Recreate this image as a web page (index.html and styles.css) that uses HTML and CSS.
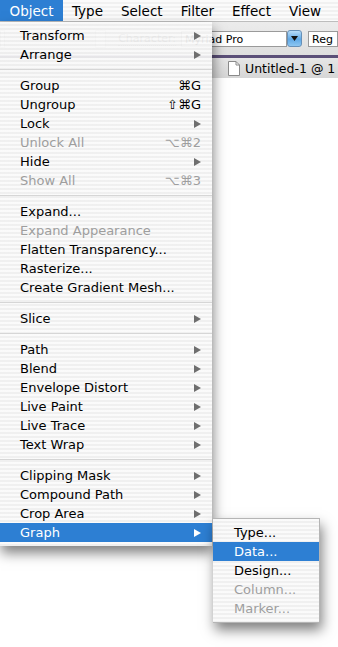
FILE: index.html
```html
<!DOCTYPE html>
<html lang="en">
<head>
    <meta charset="UTF-8">
    <meta name="viewport" content="width=device-width, initial-scale=1.0">
    <title>Object Menu</title>
    <link rel="stylesheet" href="styles.css">
</head>
<body>

<div class="menubar">
    <span class="mb-item active">Object</span>
    <span class="mb-item">Type</span>
    <span class="mb-item">Select</span>
    <span class="mb-item">Filter</span>
    <span class="mb-item">Effect</span>
    <span class="mb-item">View</span>
</div>

<div class="toolbar">
    <span class="stepper"></span>
    <span class="popup"></span>
    <span class="label">Character:</span>
    <span class="field wide">Myriad Pro</span>
    <span class="dropbtn">
        <svg width="7" height="5" viewBox="0 0 7 5"><polygon points="0,0 7,0 3.5,5" fill="#111"/></svg>
    </span>
    <span class="field short">Reg</span>
</div>
<div class="titlebar"></div>
<div class="doctab">
    <svg class="docicon" width="12" height="15" viewBox="0 0 12 15">
        <path d="M0.5 0.5 H8 L11.5 4 V14.5 H0.5 Z" fill="#fff" stroke="#8a8a8a"/>
        <path d="M8 0.5 V4 H11.5" fill="none" stroke="#8a8a8a"/>
    </svg>
    <span>Untitled-1 @ 1</span>
</div>
<div class="canvas"></div>

<!-- Object menu -->
<div class="menu main">
    <div class="item">Transform<i class="arrow"></i></div>
    <div class="item">Arrange<i class="arrow"></i></div>
    <div class="sep"></div>
    <div class="item">Group<span class="key">⌘G</span></div>
    <div class="item">Ungroup<span class="key">⇧⌘G</span></div>
    <div class="item">Lock<i class="arrow"></i></div>
    <div class="item off">Unlock All<span class="key">⌥⌘2</span></div>
    <div class="item">Hide<i class="arrow"></i></div>
    <div class="item off">Show All<span class="key">⌥⌘3</span></div>
    <div class="sep"></div>
    <div class="item">Expand...</div>
    <div class="item off">Expand Appearance</div>
    <div class="item">Flatten Transparency...</div>
    <div class="item">Rasterize...</div>
    <div class="item">Create Gradient Mesh...</div>
    <div class="sep"></div>
    <div class="item">Slice<i class="arrow"></i></div>
    <div class="sep"></div>
    <div class="item">Path<i class="arrow"></i></div>
    <div class="item">Blend<i class="arrow"></i></div>
    <div class="item">Envelope Distort<i class="arrow"></i></div>
    <div class="item">Live Paint<i class="arrow"></i></div>
    <div class="item">Live Trace<i class="arrow"></i></div>
    <div class="item">Text Wrap<i class="arrow"></i></div>
    <div class="sep"></div>
    <div class="item">Clipping Mask<i class="arrow"></i></div>
    <div class="item">Compound Path<i class="arrow"></i></div>
    <div class="item">Crop Area<i class="arrow"></i></div>
    <div class="item on">Graph<i class="arrow"></i></div>
</div>

<!-- Graph submenu -->
<div class="menu sub">
    <div class="item">Type...</div>
    <div class="item on">Data...</div>
    <div class="item">Design...</div>
    <div class="item off">Column...</div>
    <div class="item off">Marker...</div>
</div>

</body>
</html>
```

FILE: styles.css
```css
body {
    margin: 0;
    font-family: "DejaVu Sans", Verdana, sans-serif;
    background: #fff;
    width: 338px;
    height: 647px;
    overflow: hidden;
    position: relative;
}
.menubar {
    display: flex;
    height: 22px;
    background: repeating-linear-gradient(to bottom, #fbfbfb 0 2px, #f1f1f1 2px 4px);
    border-bottom: 1px solid #bdbdbd;
    box-sizing: border-box;
}
.mb-item {
    padding: 0 9.5px;
    font-size: 13.5px;
    line-height: 22px;
    color: #000;
}
.mb-item + .mb-item {
    padding: 0 9px;
}
.mb-item.active {
    background: #2d7fd3;
    color: #fff;
}
.toolbar {
    height: 33px;
    display: flex;
    align-items: center;
    background: linear-gradient(#ececec, #dedede);
    font-size: 11px;
}
.stepper {
    width: 10px;
    height: 16px;
    border: 1px solid #bbb;
    background: #f4f4f4;
}
.popup {
    width: 30px;
    height: 16px;
    margin-left: 90px;
    border: 1px solid #bbb;
    background: #f4f4f4;
}
.label {
    margin-left: 12px;
    color: #444;
    border-bottom: 1px dotted #888;
}
.field {
    height: 16px;
    line-height: 16px;
    border: 1px solid #9a9a9a;
    background: #fff;
    padding-left: 3px;
    box-sizing: border-box;
    overflow: hidden;
    white-space: nowrap;
    flex-shrink: 0;
}
.field.wide {
    width: 106px;
    margin-left: 5px;
}
.field.short {
    width: 30px;
    margin-left: 6px;
}
.dropbtn {
    flex-shrink: 0;
    width: 15px;
    height: 17px;
    border-radius: 3px;
    background: linear-gradient(#b8dcf8, #5fa8e6 55%, #8cc6f2);
    border: 1px solid #6690b8;
    box-sizing: border-box;
    display: flex;
    align-items: center;
    justify-content: center;
}
.titlebar {
    height: 3px;
    background: #5b4f78;
}
.doctab {
    height: 20px;
    display: flex;
    align-items: center;
    padding-left: 228px;
    background: linear-gradient(#e6e6e6, #d6d6d6);
    font-size: 12.5px;
    color: #000;
    white-space: nowrap;
}
.docicon {
    flex-shrink: 0;
    margin-right: 5px;
}
.canvas {
    height: 569px;
    background: #fff;
}

/* menus */
.menu {
    position: absolute;
    padding: 4px 0;
    background: repeating-linear-gradient(to bottom, rgba(250,250,250,0.94) 0 2px, rgba(239,239,239,0.94) 2px 4px);
    font-size: 13px;
    color: #000;
}
.menu.main {
    top: 22px;
    left: 0;
    width: 212px;
    box-shadow: 1px 7px 12px rgba(0, 0, 0, 0.5);
}
.menu.sub {
    top: 518px;
    left: 213px;
    width: 106px;
    border: 1px solid #b5b5b5;
    border-left: none;
    box-shadow: 2px 7px 12px rgba(0, 0, 0, 0.5);
}
.item {
    display: flex;
    align-items: center;
    height: 19px;
    line-height: 19px;
    padding: 0 11px 0 20px;
    white-space: nowrap;
}
.sub .item {
    padding-left: 21px;
}
.item.off {
    color: #9e9e9e;
}
.item.on {
    background: #2d7fd3;
    color: #fff;
}
.key {
    margin-left: auto;
}
.arrow {
    margin-left: auto;
    width: 0;
    height: 0;
    border-top: 4.5px solid transparent;
    border-bottom: 4.5px solid transparent;
    border-left: 7px solid #6e6e6e;
}
.item.on .arrow {
    border-left-color: #fff;
}
.sep {
    height: 12px;
    background: linear-gradient(transparent 5px, #d6d6d6 5px 6px, transparent 6px);
}
```
